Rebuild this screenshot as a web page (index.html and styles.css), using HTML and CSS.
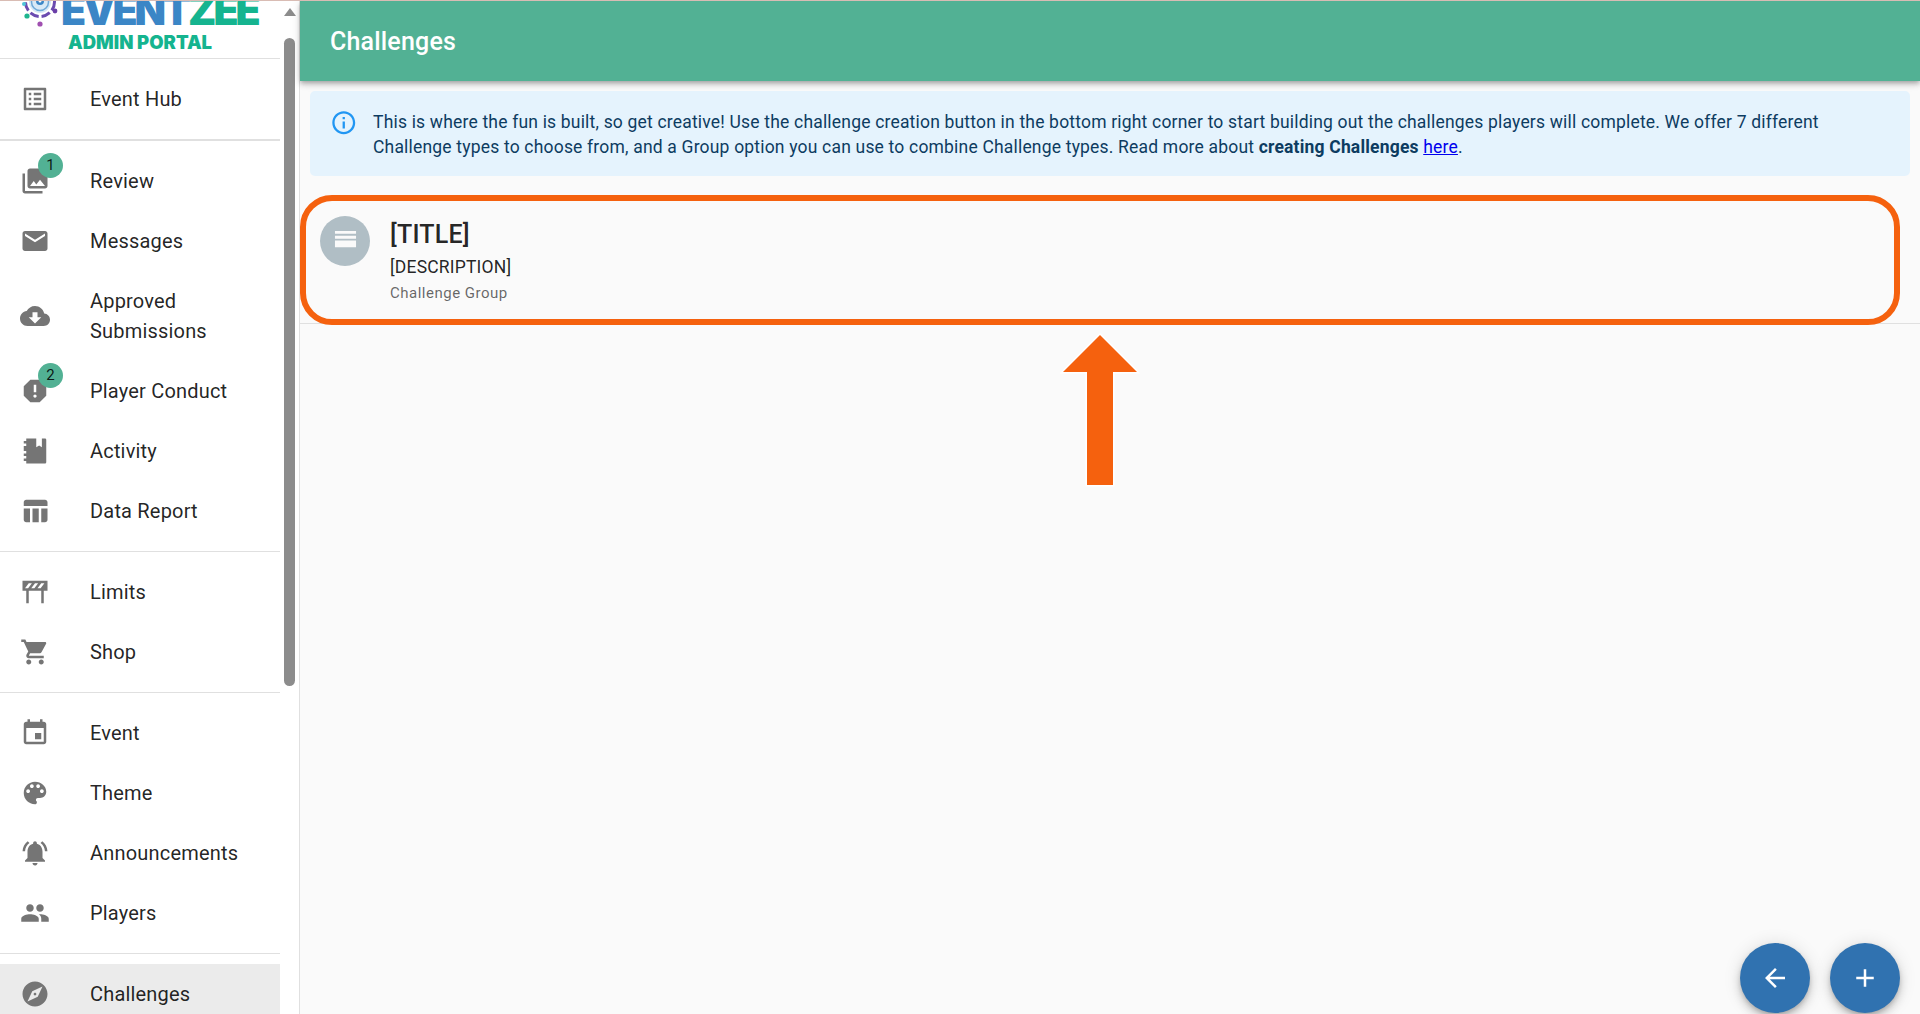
FILE: index.html
```html
<!DOCTYPE html>
<html lang="en">
<head>
<meta charset="utf-8">
<title>Challenges</title>
<link rel="stylesheet" href="styles.css">
</head>
<body>
<div class="app">
  <aside class="sidebar">
    <div class="nav">
      <div class="logo">
        <div class="logo-top">
          <svg class="logo-mark" viewBox="0 0 36 44">
            <circle cx="18" cy="18" r="14.5" fill="none" stroke="#6b4bb0" stroke-width="3" stroke-dasharray="9 3"/>
            <circle cx="18" cy="18" r="11" fill="#d8e9f6"/>
            <circle cx="18" cy="18" r="8.5" fill="none" stroke="#6fa9d8" stroke-width="1.5"/>
            <circle cx="18" cy="17" r="4" fill="#3b86c6"/>
            <circle cx="18" cy="17" r="1.5" fill="#fff"/>
            <circle cx="18" cy="40" r="2.6" fill="#a04fb0"/>
            <circle cx="5" cy="32" r="2.6" fill="#1fb58f"/>
            <circle cx="2" cy="20" r="2" fill="#4fc3d9"/>
            <circle cx="33" cy="27" r="2.4" fill="#6b3fa8"/>
          </svg>
          <div class="logo-name"><span class="logo-blue">EVENT</span><span class="logo-green">ZEE</span></div>
        </div>
        <div class="logo-sub">ADMIN PORTAL</div>
      </div>

      <div class="section section-first">
        <div class="item"><span class="ic"><svg viewBox="0 0 24 24"><path d="M19 5v14H5V5h14m1.100-2H3.900c-.5 0-.9.4-.9.9v16.200c0 .4.4.9.9.9h16.200c.4 0 .9-.5.9-.9V3.900c0-.5-.5-.9-.9-.9zM11 7h6v2h-6V7zm0 4h6v2h-6v-2zm0 4h6v2h-6zM7 7h2v2H7zm0 4h2v2H7zm0 4h2v2H7z"/></svg></span><span class="lbl">Event Hub</span></div>
      </div>

      <div class="section">
        <div class="item"><span class="ic"><svg viewBox="0 0 24 24"><path d="M22 16V4c0-1.100-.9-2-2-2H8c-1.100 0-2 .9-2 2v12c0 1.100.9 2 2 2h12c1.100 0 2-.9 2-2zm-11-4l2.030 2.710L16 11l4 5H8l3-4zM2 6v14c0 1.100.9 2 2 2h14v-2H4V6H2z"/></svg><span class="badge">1</span></span><span class="lbl">Review</span></div>
        <div class="item"><span class="ic"><svg viewBox="0 0 24 24"><path d="M20 4H4c-1.100 0-1.990.9-1.990 2L2 18c0 1.100.9 2 2 2h16c1.100 0 2-.9 2-2V6c0-1.100-.9-2-2-2zm0 4l-8 5-8-5V6l8 5 8-5v2z"/></svg></span><span class="lbl">Messages</span></div>
        <div class="item item-tall"><span class="ic"><svg viewBox="0 0 24 24"><path d="M19.350 10.040C18.670 6.590 15.640 4 12 4 9.110 4 6.600 5.640 5.350 8.040 2.340 8.360 0 10.910 0 14c0 3.310 2.690 6 6 6h13c2.760 0 5-2.240 5-5 0-2.640-2.050-4.780-4.650-4.960zM17 13l-5 5-5-5h3V9h4v4h3z"/></svg></span><span class="lbl">Approved<br>Submissions</span></div>
        <div class="item"><span class="ic"><svg viewBox="0 0 24 24"><path d="M15.730 3H8.270L3 8.270v7.460L8.270 21h7.460L21 15.730V8.270L15.730 3zM12 17.300c-.72 0-1.300-.58-1.300-1.300 0-.72.58-1.300 1.300-1.300.72 0 1.300.58 1.300 1.300 0 .72-.58 1.300-1.300 1.300zm1-4.300h-2V7h2v6z"/></svg><span class="badge">2</span></span><span class="lbl">Player Conduct</span></div>
        <div class="item"><span class="ic"><svg viewBox="0 0 24 24"><path d="M5 2h8v7l2.300-1.500L17.500 9V2H20a1 1 0 0 1 1 1v18a1 1 0 0 1-1 1H5v-2H3v-2h2v-2H3v-2h2v-2H3V8h2V6H3V4h2z"/></svg></span><span class="lbl">Activity</span></div>
        <div class="item"><span class="ic"><svg viewBox="0 0 24 24"><path d="M10 10.020h5V21h-5zM17 21h3c1.100 0 2-.9 2-2v-9h-5v11zm3-18H5c-1.100 0-2 .9-2 2v3h19V5c0-1.100-.9-2-2-2zM3 19c0 1.100.9 2 2 2h3V10H3v9z"/></svg></span><span class="lbl">Data Report</span></div>
      </div>

      <div class="section">
        <div class="item"><span class="ic"><svg viewBox="0 0 24 24"><path fill-rule="evenodd" d="M2 3h20v8h-3v10h-2V11H7v10H5V11H2zM4 9h2.500l3-4H7zM9 9h2.500l3-4H12zM14 9h2.500l3-4H17z"/></svg></span><span class="lbl">Limits</span></div>
        <div class="item"><span class="ic"><svg viewBox="0 0 24 24"><path d="M7 18c-1.100 0-1.990.9-1.990 2S5.900 22 7 22s2-.9 2-2-.9-2-2-2zM1 2v2h2l3.600 7.590-1.350 2.450c-.16.28-.25.61-.25.96 0 1.100.9 2 2 2h12v-2H7.420c-.14 0-.25-.11-.25-.25l.03-.12.9-1.630h7.450c.75 0 1.410-.41 1.750-1.030l3.580-6.490c.08-.14.12-.31.12-.48 0-.55-.45-1-1-1H5.210l-.94-2H1zm16 16c-1.100 0-1.990.9-1.990 2s.89 2 1.990 2 2-.9 2-2-.9-2-2-2z"/></svg></span><span class="lbl">Shop</span></div>
      </div>

      <div class="section">
        <div class="item"><span class="ic"><svg viewBox="0 0 24 24"><path d="M17 12h-5v5h5v-5zM16 1v2H8V1H6v2H5c-1.110 0-1.990.9-1.990 2L3 19c0 1.100.89 2 2 2h14c1.100 0 2-.9 2-2V5c0-1.100-.9-2-2-2h-1V1h-2zm3 18H5V8h14v11z"/></svg></span><span class="lbl">Event</span></div>
        <div class="item"><span class="ic"><svg viewBox="0 0 24 24"><path d="M12 3c-4.970 0-9 4.030-9 9s4.030 9 9 9c.83 0 1.500-.67 1.500-1.500 0-.39-.15-.74-.39-1.010-.23-.26-.38-.61-.38-.99 0-.83.67-1.500 1.500-1.500H16c2.760 0 5-2.240 5-5 0-4.420-4.030-8-9-8zm-5.500 9c-.83 0-1.500-.67-1.500-1.500S5.670 9 6.500 9 8 9.670 8 10.500 7.330 12 6.500 12zm3-4C8.670 8 8 7.330 8 6.500S8.670 5 9.500 5s1.500.67 1.500 1.500S10.330 8 9.500 8zm5 0c-.83 0-1.500-.67-1.500-1.500S13.670 5 14.500 5s1.500.67 1.500 1.500S15.330 8 14.500 8zm3 4c-.83 0-1.500-.67-1.500-1.500S16.670 9 17.500 9s1.500.67 1.500 1.500-.67 1.500-1.500 1.500z"/></svg></span><span class="lbl">Theme</span></div>
        <div class="item"><span class="ic"><svg viewBox="0 0 24 24"><path d="M7.580 4.080L6.150 2.650C3.750 4.480 2.170 7.300 2.030 10.500h2c.15-2.650 1.510-4.970 3.550-6.420zm12.390 6.420h2c-.15-3.200-1.730-6.020-4.120-7.850l-1.420 1.430c2.020 1.450 3.390 3.770 3.540 6.420zM18 11c0-3.070-1.640-5.640-4.500-6.320V4c0-.83-.67-1.500-1.500-1.500s-1.500.67-1.500 1.500v.68C7.630 5.360 6 7.920 6 11v5l-2 2v1h16v-1l-2-2v-5zm-6 11c.14 0 .27-.01.4-.04.65-.14 1.180-.58 1.440-1.180.1-.24.15-.5.15-.78h-4c.01 1.100.9 2 2.010 2z"/></svg></span><span class="lbl">Announcements</span></div>
        <div class="item"><span class="ic"><svg viewBox="0 0 24 24"><path d="M16 11c1.660 0 2.990-1.340 2.990-3S17.660 5 16 5c-1.660 0-3 1.340-3 3s1.340 3 3 3zm-8 0c1.660 0 2.990-1.340 2.990-3S9.660 5 8 5C6.340 5 5 6.340 5 8s1.340 3 3 3zm0 2c-2.330 0-7 1.170-7 3.500V19h14v-2.500c0-2.330-4.670-3.500-7-3.500zm8 0c-.29 0-.62.02-.97.05 1.160.84 1.970 1.970 1.970 3.450V19h6v-2.500c0-2.330-4.670-3.500-7-3.500z"/></svg></span><span class="lbl">Players</span></div>
      </div>

      <div class="section section-last">
        <div class="item item-active"><span class="ic"><svg viewBox="0 0 24 24"><path d="M12 10.900c-.61 0-1.100.49-1.100 1.100s.49 1.100 1.100 1.100c.61 0 1.100-.49 1.100-1.100s-.49-1.100-1.100-1.100zM12 2C6.480 2 2 6.480 2 12s4.480 10 10 10 10-4.480 10-10S17.520 2 12 2zm2.190 12.190L6 18l3.810-8.190L18 6l-3.810 8.190z"/></svg></span><span class="lbl">Challenges</span></div>
      </div>
    </div>
    <div class="scrollbar">
      <span class="scroll-arrow"></span>
      <span class="scroll-thumb"></span>
    </div>
  </aside>

  <main class="main">
    <header class="topbar"><h1 class="topbar-title">Challenges</h1></header>
    <div class="alert-wrap">
      <div class="alert">
        <svg class="alert-icon" viewBox="0 0 24 24"><path d="M11 7h2v2h-2zm0 4h2v6h-2zm1-9C6.480 2 2 6.480 2 12s4.480 10 10 10 10-4.480 10-10S17.520 2 12 2zm0 18c-4.410 0-8-3.590-8-8s3.590-8 8-8 8 3.590 8 8-3.590 8-8 8z"/></svg>
        <p class="alert-text">This is where the fun is built, so get creative! Use the challenge creation button in the bottom right corner to start building out the challenges players will complete. We offer 7 different Challenge types to choose from, and a Group option you can use to combine Challenge types. Read more about <strong>creating Challenges</strong> <a href="#">here</a>.</p>
      </div>
    </div>
    <div class="row">
      <span class="avatar"><svg viewBox="0 0 24 24"><path d="M1 1h22v3H1zM1 6h22v3H1zM1 11h22v7H1z"/></svg></span>
      <div class="row-text">
        <div class="row-title">[TITLE]</div>
        <div class="row-desc">[DESCRIPTION]</div>
        <div class="row-type">Challenge Group</div>
      </div>
    </div>

    <div class="callout"></div>
    <svg class="arrow" viewBox="0 0 80 156"><path d="M40 2L77 39H53V152H27V39H3z" fill="#f5610e" stroke="#fff" stroke-width="3" paint-order="stroke"/></svg>

    <div class="fabs">
      <button class="fab"><svg viewBox="0 0 24 24"><path d="M20 11H7.830l5.590-5.590L12 4l-8 8 8 8 1.410-1.410L7.830 13H20v-2z"/></svg></button>
      <button class="fab"><svg viewBox="0 0 24 24"><path d="M19 13h-6v6h-2v-6H5v-2h6V5h2v6h6v2z"/></svg></button>
    </div>
  </main>
</div>
</body>
</html>
```

FILE: styles.css
```css
* { box-sizing: border-box; }
html, body { margin: 0; height: 100%; overflow: hidden; }
body {
  font-family: Roboto, "Liberation Sans", sans-serif;
  background: #fafafa;
  color: rgba(0, 0, 0, .87);
  border-top: 1px solid #d9bcb4;
}
.app { display: flex; height: 100%; }

/* sidebar */
.sidebar {
  display: flex;
  flex: 0 0 300px;
  height: 100%;
  overflow: hidden;
  background: #fff;
  border-right: 1px solid #e0e0e0;
}
.nav { flex: 0 0 280px; overflow: hidden; }

.logo {
  height: 58px;
  overflow: hidden;
  border-bottom: 1px solid #e0e0e0;
}
.logo-top {
  display: flex;
  align-items: flex-end;
  height: 27px;
  padding-left: 22px;
}
.logo-mark { flex: 0 0 36px; width: 36px; height: 44px; }
.logo-name {
  margin-left: 3px;
  margin-bottom: -3px;
  font-family: Inter, sans-serif;
  font-weight: 900;
  font-size: 41px;
  letter-spacing: -3.100px;
  line-height: 1;
  white-space: nowrap;
}
.logo-blue { color: #3b86c6; }
.logo-green { color: #15b48f; }
.logo-sub {
  margin: 4px 0 0 68px;
  font-family: Inter, sans-serif;
  font-weight: 900;
  font-size: 18.500px;
  line-height: 20px;
  color: #15b48f;
  white-space: nowrap;
}

.section { padding: 10px 0; border-bottom: 1px solid #e0e0e0; }
.section-first { border-bottom-width: 2px; }
.section-last { border-bottom: 0; }
.item {
  display: flex;
  align-items: center;
  height: 60px;
  padding-left: 20px;
  font-size: 20px;
  line-height: 30px;
  letter-spacing: .1875px;
}
.item-tall { height: 90px; }
.item-active { background: #ebebeb; }
.ic { position: relative; flex: 0 0 70px; height: 30px; }
.ic svg { display: block; width: 30px; height: 30px; fill: #757575; }
.badge {
  position: absolute;
  left: 18px;
  top: -13.500px;
  width: 25px;
  height: 25px;
  border-radius: 50%;
  background: #52b194;
  font-size: 15px;
  line-height: 25px;
  text-align: center;
  color: rgba(0, 0, 0, .87);
}

.scrollbar {
  display: flex;
  flex-direction: column;
  align-items: center;
  flex: 0 0 19px;
  padding-top: 7px;
}
.scroll-arrow {
  width: 0;
  height: 0;
  border-left: 6.500px solid transparent;
  border-right: 6.500px solid transparent;
  border-bottom: 8px solid #8c8c8c;
}
.scroll-thumb {
  width: 11px;
  height: 648px;
  margin-top: 22px;
  border-radius: 6px;
  background: #8c8c8c;
}

/* main */
.main { position: relative; flex: 1; min-width: 0; height: 100%; }
.topbar {
  display: flex;
  align-items: center;
  height: 80px;
  padding-left: 30px;
  background: #52b194;
  box-shadow: 0 2px 4px -1px rgba(0, 0, 0, .2), 0 4px 5px rgba(0, 0, 0, .14), 0 1px 10px rgba(0, 0, 0, .12);
}
.topbar-title {
  margin: 0;
  font-size: 25px;
  font-weight: 500;
  letter-spacing: .1875px;
  color: #fff;
}
.alert-wrap { padding: 10px; }
.alert {
  display: flex;
  align-items: flex-start;
  padding: 18.500px 22px 16.500px;
  border-radius: 5px;
  background: #e5f3fd;
  color: #0d3c61;
}
.alert-icon { flex: 0 0 27.500px; width: 27.500px; height: 27.500px; margin: -1px 1px 0 -2px; fill: #2196f3; }
.alert-text {
  margin: 0 0 0 14.500px;
  font-size: 17.500px;
  line-height: 25px;
  letter-spacing: .1875px;
}
.alert-text a { color: #0000ee; }
.alert-text strong { font-weight: 700; }

.row {
  display: flex;
  align-items: flex-start;
  height: 138px;
  padding: 30px 0 0 20px;
  border-bottom: 1px solid #e0e0e0;
}
.avatar {
  display: flex;
  align-items: center;
  justify-content: center;
  flex: 0 0 50px;
  height: 50px;
  border-radius: 50%;
  background: #b0bec5;
}
.avatar svg { width: 23px; height: 23px; fill: #fafafa; }
.row-text { margin-left: 20px; }
.row-title { font-size: 25px; line-height: 37.500px; letter-spacing: .1875px; font-weight: 500; }
.row-desc { margin-top: 1px; font-size: 17.500px; line-height: 25px; letter-spacing: .1875px; }
.row-type { margin-top: 1px; font-size: 15px; line-height: 25px; letter-spacing: .5px; color: rgba(0, 0, 0, .6); }

.callout {
  position: absolute;
  left: 0;
  top: 194px;
  width: 1600px;
  height: 130px;
  border: 6.500px solid #f5610e;
  border-radius: 32px;
}
.arrow {
  position: absolute;
  left: 760px;
  top: 332px;
  width: 80px;
  height: 156px;
}
.fabs {
  position: absolute;
  right: 20px;
  top: 942px;
  display: flex;
  gap: 20px;
}
.fab {
  display: flex;
  align-items: center;
  justify-content: center;
  width: 70px;
  height: 70px;
  padding: 0;
  border: 0;
  border-radius: 50%;
  background: #3072b0;
  box-shadow: 0 3px 5px -1px rgba(0, 0, 0, .2), 0 6px 10px rgba(0, 0, 0, .14), 0 1px 18px rgba(0, 0, 0, .12);
}
.fab svg { width: 30px; height: 30px; fill: #fff; }
```
